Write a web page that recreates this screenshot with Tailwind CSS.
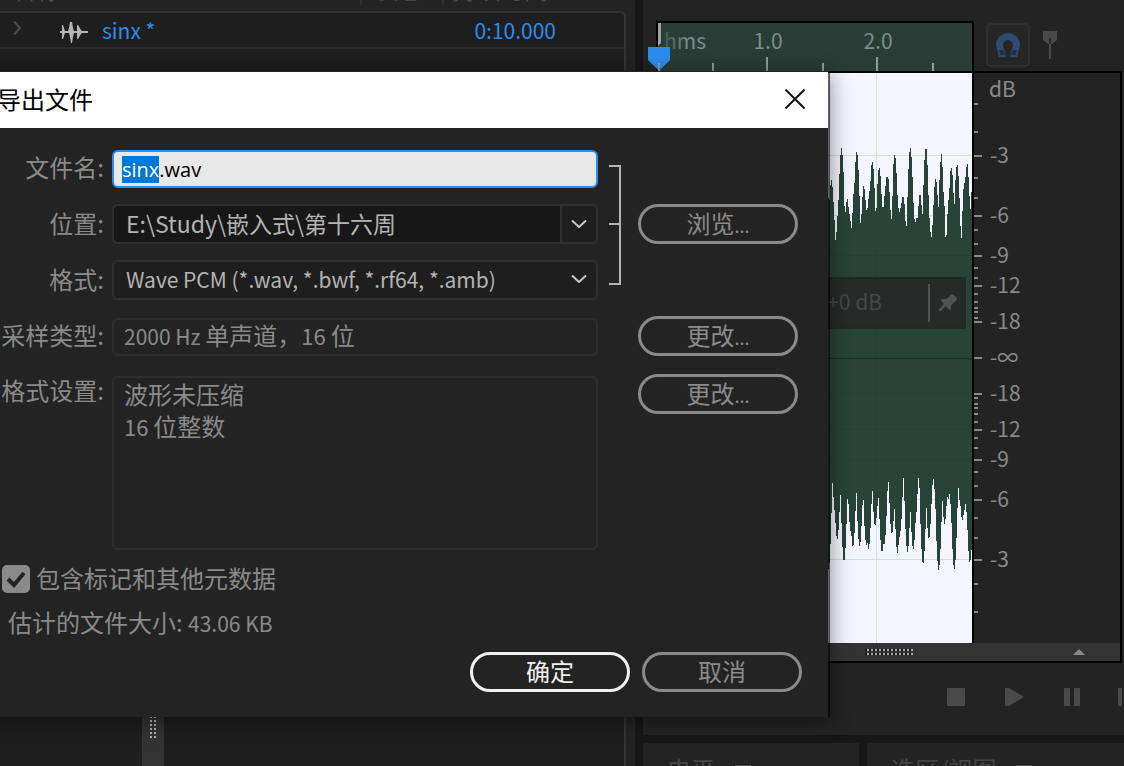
<!DOCTYPE html>
<html lang="zh-CN">
<head>
<meta charset="utf-8">
<meta name="viewport" content="width=device-width, initial-scale=1">
<title>导出文件</title>
<script src="https://cdn.jsdelivr.net/npm/@tailwindcss/browser@4"></script>
</head>
<body class="relative h-screen overflow-hidden bg-[#171717] font-['Noto_Sans_CJK_SC',sans-serif] text-[#8a8a8a]">

<main class="grid h-full grid-cols-[635fr_481fr] gap-2">

  <!-- File list -->
  <section class="flex min-w-0 flex-col bg-[#232323] pr-[9px]">
    <div class="flex h-[11px] shrink-0 items-end overflow-hidden pb-[6px] text-2xl leading-8 text-[#4a4a4a]">
      <span class="w-[360px] shrink-0 pl-3">名称</span>
      <span class="w-[82px] shrink-0 border-l-2 border-[#2e2e2e] pl-3">状态</span>
      <span class="whitespace-nowrap border-l-2 border-[#2e2e2e] pl-2">持续时间</span>
    </div>
    <div class="flex min-h-0 flex-1 flex-col rounded-tr-md border-t-2 border-r-2 border-[#333] bg-[#1e1e1e]">
      <div class="flex h-9 shrink-0 items-center border-b-2 border-[#2b2b2b] text-[#2d8ceb]">
        <button aria-label="展开" class="flex w-[60px] items-center pb-1 pl-3">
          <svg class="h-4 w-3" viewBox="0 0 12 16" fill="none" stroke="#4a4a4a" stroke-width="2"><path d="M2 1.500 8 8 2 14.500"/></svg>
        </button>
        <svg class="mt-[3px] h-[22px] w-7" viewBox="0 0 28 22" fill="#b4b4b4"><path d="M0 10h2V4h1l2 6h3l1-3 1-6h2l1 6 1 3h3V4h1l3 5 1 1h6v2h-6l-1 1-3 5h-1v-6h-3l-1 4-1 6h-1l-1-6-1-4H5l-2 6H2v-6H0z"/></svg>
        <span class="pl-[14px] text-[21px] leading-8">sinx *</span>
        <span class="mr-[68px] ml-auto text-[21px] leading-8">0:10.000</span>
      </div>
      <div class="mt-auto flex justify-start pl-[142px]">
        <div class="flex h-[50px] w-[22px] items-start justify-center bg-[#333]">
          <svg class="h-[22px] w-[6px]" viewBox="0 0 6 22"><path d="M1 0v22M5 0v22" stroke="#b0b0b0" stroke-width="2" stroke-dasharray="2 2"/></svg>
        </div>
      </div>
    </div>
  </section>

  <div class="flex min-w-0 flex-col gap-2">
    <!-- Waveform editor -->
    <section class="flex min-h-0 flex-1 flex-col bg-[#232323] pt-[21px] pr-[2px] pl-[13px]">
      <div class="flex h-[50px] shrink-0">
        <div class="min-w-0 flex-1 border-2 border-b-0 border-black bg-[#283d36]">
          <svg class="h-12 w-full overflow-visible" viewBox="658 23 314 48" preserveAspectRatio="xMinYMin slice">
            <defs><linearGradient id="fade"><stop offset="0" stop-color="#445850"/><stop offset=".6" stop-color="#7b8f88"/></linearGradient></defs>
            <path d="M658 23h3v20l-3 3z" fill="#98a29e"/>
            <g font-size="21" fill="#7b8f88">
              <text x="664" y="49" fill="url(#fade)">hms</text>
              <text x="768" y="49" text-anchor="middle">1.0</text>
              <text x="878" y="49" text-anchor="middle">2.0</text>
            </g>
            <path d="M648 47h22v13l-11 11-11-11z" fill="#2d8ceb"/>
            <path d="M659 63v8M713 63v8M767 57v14M823 63v8M877 57v14M933 63v8" stroke="#8a9e97" stroke-width="2"/>
          </svg>
        </div>
        <div class="flex w-[148px] items-start gap-[13px] pt-[2px] pl-3">
          <button aria-label="对齐" class="flex size-11 items-center justify-center rounded-[5px] border-2 border-[#2f2f2f] bg-[#262626]">
            <svg class="size-[26px]" viewBox="0 0 26 26"><path d="M4 25 1 13a12 12 0 1 1 24 0l-3 12h-7l3-12a5 5 0 1 0-10 0l3 12z" fill="#2b4d72"/><path d="M4 18h4l2 5H6zM22 18h-4l-2 5h4z" fill="#1f2c3b"/></svg>
          </button>
          <button aria-label="标记" class="mt-2 h-7 w-[14px]">
            <svg class="h-7 w-[14px]" viewBox="0 0 14 28"><path d="M0 0h14v9l-5 4H8v15H6V13H5L0 9z" fill="#4a4a4a"/><path d="M7 7v6" stroke="#2b2b2b" stroke-width="2"/></svg>
          </button>
        </div>
      </div>

      <div class="flex h-[592px] shrink-0 flex-col border-2 border-black">
        <div class="flex min-h-0 flex-1">
          <div class="relative min-w-0 flex-1 overflow-hidden bg-[#f4f5ff]">
            <svg class="h-[570px] w-full" viewBox="658 73 314 570" preserveAspectRatio="xMaxYMin slice">
              <path d="M658 155.500h314M658 559.500h314M876.500 73v570M658 215.500h314M658 499.500h314" stroke="#cfe3d0"/>
              <g fill="#284338" shape-rendering="crispEdges">
                <path d="M658 195h170v163H658z"/>
                <path transform="translate(820 130) scale(.3333)" d="M24 195 28 218 31 168 34 148 37 162 40 208 43 255 46 335 50 303 53 250 56 204 59 118 62 68 65 53 68 80 71 135 73 225 77 249 80 212 82 204 85 226 88 249 91 268 94 300 97 262 100 196 103 170 106 102 109 67 112 67 115 106 118 180 121 281 124 262 127 210 130 168 133 171 136 204 139 242 142 238 145 212 148 189 151 163 154 107 157 92 160 107 163 158 166 240 169 249 172 172 175 124 178 110 181 128 184 182 187 230 190 236 193 204 196 175 199 142 205 140 208 175 211 230 214 278 217 220 220 108 223 74 226 76 229 114 232 185 235 232 238 249 241 238 244 225 247 200 250 198 253 212 256 264 259 304 262 218 265 128 268 70 271 50 274 70 277 122 280 210 283 262 286 281 289 262 292 270 295 235 298 198 301 190 304 214 307 268 310 182 313 98 316 58 319 50 322 85 325 182 328 255 331 303 334 326 337 295 340 238 343 176 346 145 349 150 352 182 355 249 358 160 361 103 364 67 367 92 370 180 373 206 376 318 379 328 382 261 385 216 388 184 391 127 394 110 397 125 400 176 403 237 406 160 409 115 412 102 415 125 418 186 421 275 424 340 427 258 430 180 433 162 436 148 439 116 442 97 445 128 448 186 451 248 454 188 457 184V690H24z"/>
                <path transform="translate(820 360) scale(.3333)" d="M24 632 28 618 31 567 34 480 37 363 40 402 43 445 46 480 49 525 52 541 55 520 58 470 61 391 64 475 67 552 70 598 73 604 76 575 79 510 82 415 85 420 88 480 91 513 94 522 97 558 100 560 103 530 106 470 109 384 112 472 115 532 118 560 121 553 124 512 127 440 130 406 133 488 136 538 139 557 142 545 145 570 148 560 151 518 154 445 157 380 160 448 163 490 166 500 169 480 172 445 175 403 178 462 181 532 184 573 187 578 190 550 193 556 196 535 199 483 202 402 205 354 208 415 211 485 214 520 217 522 220 493 223 434 226 494 229 555 232 584 235 562 238 533 241 520 244 488 247 428 250 341 253 406 256 496 259 554 262 579 265 567 268 520 271 444 274 506 277 556 280 571 283 550 286 496 289 464 292 415 295 352 298 363 301 475 304 557 307 604 310 614 313 585 316 526 319 430 322 496 325 534 328 537 331 505 334 444 337 382 340 354 343 377 346 426 349 528 352 598 355 630 358 625 361 582 364 505 367 412 370 466 373 492 376 486 379 446 382 410 385 420 388 399 391 422 394 472 397 555 400 612 403 632 406 610 409 553 412 460 415 376 418 416 421 430 424 470 427 482 430 468 433 456 436 430 439 445 442 496 445 567 448 605 451 606 454 570 457 570V-30H24z"/>
              </g>
              <path d="M658 255.500h314M658 285.500h314M658 321.500h314M658 393.500h314M658 429.500h314M658 459.500h314M876.500 250v230" stroke="#244035"/>
              <path d="M658 358.500h314" stroke="#1d2a22"/>
            </svg>
            <div class="absolute top-[204px] right-[6px] flex h-[52px] w-[200px] items-center justify-end border-2 border-[#1f2a26] bg-[#262a29] text-[21px] leading-8 text-[#454847]">
              <span class="mr-[46px] pb-1">+0 dB</span>
              <span class="h-[38px] w-[2px] bg-[#505352]"></span>
              <button aria-label="固定" class="mr-[7px] ml-[9px] h-[18px] w-[18px]">
                <svg class="size-[18px]" viewBox="0 0 18 18"><path d="M11 1q2-2 5 1t1 5l-2 1-3 4v3l-2 1-3-4-5 5-2 0 0-2 5-5-3-3 1-2h4l3-2z" fill="#505352"/></svg>
              </button>
            </div>
          </div>
          <svg class="h-[570px] w-[148px] shrink-0" viewBox="972 73 148 570" fill="#8a8a8a" font-size="21">
            <path d="M972 73h2v570h-2z" fill="#000"/>
            <path d="M974 156h8M974 216h8M974 256h8M974 286h8M974 322h8M974 358h8M974 394h8M974 430h8M974 460h8M974 500h8M974 560h8M974 104h4M974 132h4M974 178h4M974 198h4M974 230h4M974 244h4M974 268h4M974 278h4M974 294h4M974 302h4M974 308h4M974 312h4M974 318h4M974 398h4M974 404h4M974 408h4M974 414h4M974 422h4M974 438h4M974 448h4M974 472h4M974 486h4M974 518h4M974 538h4M974 584h4M974 612h4" stroke="#8a8a8a" stroke-width="2"/>
            <text x="989" y="97">dB</text>
            <text x="990" y="163">-3</text><text x="990" y="223">-6</text><text x="990" y="263">-9</text><text x="990" y="293">-12</text><text x="990" y="329">-18</text><text x="990" y="365">-∞</text><text x="990" y="401">-18</text><text x="990" y="437">-12</text><text x="990" y="467">-9</text><text x="990" y="507">-6</text><text x="990" y="567">-3</text>
          </svg>
        </div>
        <div class="flex h-[18px] shrink-0 items-center justify-end bg-[#333]">
          <svg class="mr-[160px] h-[6px] w-12" viewBox="0 0 48 6"><path d="M0 1h48M0 5h48" stroke="#111" stroke-width="2"/><path d="M2 1h46M2 5h46" stroke="#b0b0b0" stroke-width="2" stroke-dasharray="2 2"/></svg>
          <svg class="mr-[35px] h-[6px] w-3" viewBox="0 0 12 6"><path d="M0 6 6 0l6 6z" fill="#8a8a8a"/></svg>
        </div>
      </div>

      <div class="flex flex-1 items-center justify-end gap-10 overflow-hidden pb-1 text-[#4a4a4a]">
        <button aria-label="停止"><svg class="size-[18px]" viewBox="0 0 18 18" fill="currentColor"><rect width="18" height="18" rx="1"/></svg></button>
        <button aria-label="播放"><svg class="h-[18px] w-[19px]" viewBox="0 0 19 18" fill="currentColor"><path d="M0 1q0-1 1-1h3l15 9-15 9H1q-1 0-1-1z"/></svg></button>
        <button aria-label="暂停"><svg class="h-[18px] w-4" viewBox="0 0 16 18" fill="currentColor"><rect width="6" height="18" rx="1"/><rect x="10" width="6" height="18" rx="1"/></svg></button>
        <button aria-label="上一个" class="-ml-[2px] w-1"><svg class="h-[18px] w-[6px]" viewBox="0 0 6 18" fill="currentColor"><rect width="6" height="18" rx="1"/></svg></button>
      </div>
    </section>

    <div class="grid h-[23px] shrink-0 grid-cols-[216fr_257fr] gap-2 overflow-hidden text-2xl leading-8 text-[#454545]">
      <section class="flex gap-5 bg-[#232323] pt-[10px] pl-6"><h2>电平</h2><svg class="mt-3 h-3 w-4" viewBox="0 0 16 12"><path d="M0 1h16M0 6h16" stroke="#4a4a4a" stroke-width="2"/></svg></section>
      <section class="flex gap-5 bg-[#232323] pt-[10px] pl-6"><h2>选区/视图</h2><svg class="mt-3 h-3 w-4" viewBox="0 0 16 12"><path d="M0 1h16M0 6h16" stroke="#4a4a4a" stroke-width="2"/></svg></section>
    </div>
  </div>
</main>

<!-- Export dialog, partly beyond the left edge of the window -->
<form role="dialog" aria-labelledby="dlg" class="absolute top-[71px] -left-4 w-[846px] border-t border-r-2 border-[#232323] border-r-black/60 bg-[#232323] bg-clip-padding pb-[25px] text-2xl leading-8 shadow-[0_4px_20px_rgba(0,0,0,0.45)]">
  <header class="flex h-14 items-center justify-between bg-white pr-[23px] pb-[2px] pl-[13px] text-black">
    <h1 id="dlg">导出文件</h1>
    <button type="button" aria-label="关闭"><svg class="size-5" viewBox="0 0 20 20" stroke="#111" stroke-width="2"><path d="M.5.500 19.500 19.500M19.500.500.500 19.500"/></svg></button>
  </header>

  <div class="grid grid-cols-[120px_486px_40px_160px] gap-y-4 pt-[22px]">
    <label for="fname" class="self-center pb-1 text-right">文件名:</label>
    <input id="fname" value="sinx.wav" autofocus class="ml-2 h-[38px] w-[486px] self-center rounded-md border-2 border-[#2d8ceb] bg-[#e8e8e8] px-2 font-['Open_Sans','Noto_Sans_CJK_SC',sans-serif] text-xl leading-8 text-black outline-none selection:bg-[#0078d7] selection:text-white">
    <svg class="col-start-3 row-span-3 row-start-1 mt-[15px] ml-[19px] h-[120px] w-[12px]" viewBox="0 0 12 120" fill="none" stroke="#b4b4b4" stroke-width="2"><path d="M0 1h11v118H0M0 59h11"/></svg>

    <label for="loc" class="col-start-1 self-center pb-[2px] text-right">位置:</label>
    <div class="ml-2 flex h-10 w-[486px] overflow-hidden rounded-md border-2 border-[#2f2f2f] bg-[#171717]">
      <input id="loc" value="E:\Study\嵌入式\第十六周" class="min-w-0 flex-1 pb-[2px] pl-3 text-[23px] text-[#b4b4b4] outline-none">
      <button type="button" aria-label="最近位置" class="flex w-9 items-center justify-center border-l-2 border-[#2f2f2f] bg-[#1e1e1e]"><svg class="h-2 w-4" viewBox="0 0 16 8" fill="none" stroke="#c8c8c8" stroke-width="2"><path d="M1 .500 8 7 15 .500"/></svg></button>
    </div>
    <button type="button" class="col-start-4 ml-2 h-10 w-[160px] rounded-full border-[3px] border-[#8a8a8a] pb-[2px] leading-8">浏览<span class="text-lg leading-8">...</span></button>

    <label for="fmt" class="col-start-1 self-center pb-[2px] text-right">格式:</label>
    <div class="relative ml-2 h-10 w-[486px]">
      <select id="fmt" class="size-full appearance-none rounded-md border-2 border-[#2f2f2f] bg-[#1e1e1e] pb-[2px] pl-3 text-[21px] text-[#b4b4b4]"><option>Wave PCM (*.wav, *.bwf, *.rf64, *.amb)</option></select>
      <svg class="pointer-events-none absolute top-[15px] right-[11px] h-2 w-4" viewBox="0 0 16 8" fill="none" stroke="#c8c8c8" stroke-width="2"><path d="M1 .500 8 7 15 .500"/></svg>
    </div>

    <span class="col-start-1 self-center pb-[2px] text-right whitespace-nowrap">采样类型:</span>
    <div class="mt-[2px] ml-2 flex h-[38px] w-[486px] items-center rounded-md border-2 border-[#2e2e2e] pb-1 pl-[10px]"><span class="whitespace-pre"><span class="text-[21px]">2000 Hz </span>单声道，<span class="text-[22px]">16 </span>位</span></div>
    <button type="button" class="col-start-4 ml-2 h-10 w-[160px] rounded-full border-[3px] border-[#8a8a8a] pb-[2px] leading-8">更改<span class="text-lg leading-8">...</span></button>

    <span class="col-start-1 pt-[2px] text-right whitespace-nowrap">格式设置:</span>
    <div class="mt-1 ml-2 h-[174px] w-[486px] rounded-md border-2 border-[#2e2e2e] pl-[10px]">波形未压缩<br><span class="text-[22px]">16 </span>位整数</div>
    <button type="button" class="col-start-4 mt-[2px] ml-2 h-10 w-[160px] rounded-full border-[3px] border-[#8a8a8a] pb-[2px] leading-8">更改<span class="text-lg leading-8">...</span></button>
  </div>

  <div class="relative mt-3 flex items-center gap-[6px] pl-[18px]">
    <input id="meta" type="checkbox" checked class="size-7 appearance-none rounded-[5px] border-2 border-[#8a8a8a] checked:bg-[#8a8a8a]">
    <svg class="pointer-events-none absolute left-[22px] h-5 w-5" viewBox="0 0 20 20" fill="none" stroke="#232323" stroke-width="4"><path d="M2 10 8 16 18 4"/></svg>
    <label for="meta" class="pb-[2px]">包含标记和其他元数据</label>
  </div>
  <p class="mt-[10px] pl-6">估计的文件大小: <span class="text-[21px]">43.06 KB</span></p>

  <div class="mt-[13px] flex justify-end gap-3 pr-[26px]">
    <button type="submit" class="h-10 w-[160px] rounded-full border-[3px] border-[#f0f0f0] pb-[2px] leading-8 text-[#f0f0f0]">确定</button>
    <button type="button" class="h-10 w-[160px] rounded-full border-[3px] border-[#8a8a8a] pb-[2px] leading-8">取消</button>
  </div>
</form>

<script>
  const fname = document.getElementById('fname');
  fname.focus();
  fname.setSelectionRange(0, 4);
</script>
</body>
</html>
